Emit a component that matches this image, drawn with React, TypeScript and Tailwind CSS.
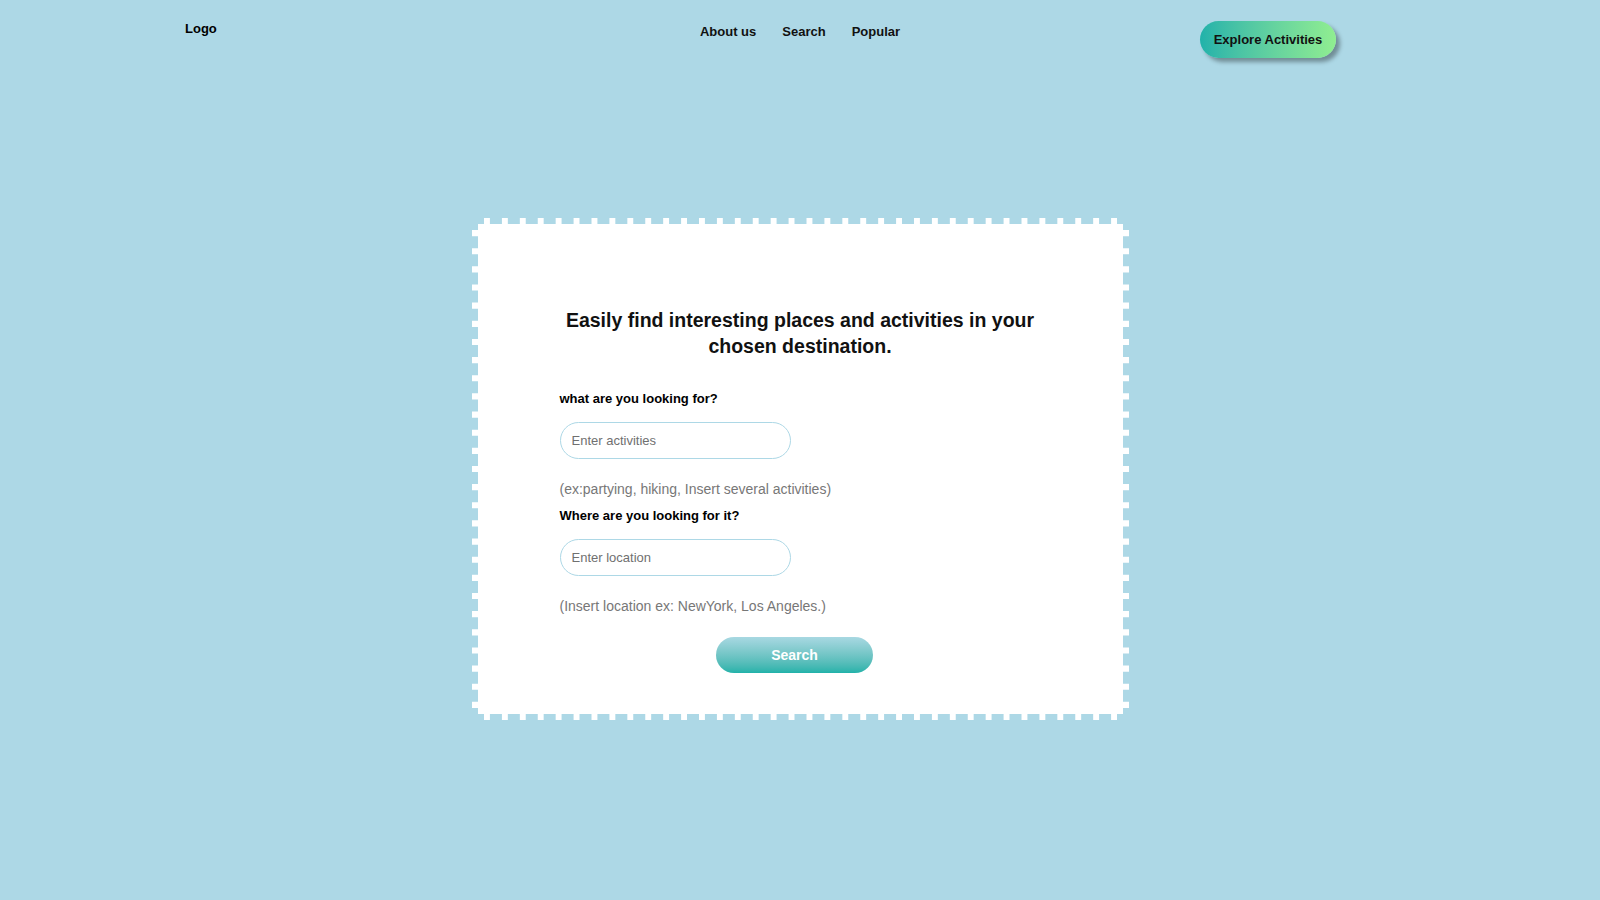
import React from "react";

const NAV_LINKS = ["About us", "Search", "Popular"];

function Header() {
  return (
    <header className="grid grid-cols-[1fr_auto_1fr] items-start pt-[21px]">
      <a href="#" className="ml-[185px] mt-[-2px] justify-self-start text-[13px] font-bold leading-5 text-black">
        Logo
      </a>
      <nav className="mt-[1px] flex items-center gap-[26px] text-[13px] font-bold leading-5 text-[#111]">
        {NAV_LINKS.map((link) => (
          <a key={link} href="#">
            {link}
          </a>
        ))}
      </nav>
      <div className="mr-[264px] justify-self-end">
        <button className="h-[37px] w-[136px] rounded-full bg-gradient-to-r from-[#20b2aa] to-[#90ee90] text-[13px] font-bold text-[#111] shadow-[4px_4px_4px_rgba(0,0,0,0.35)]">
          Explore Activities
        </button>
      </div>
    </header>
  );
}

function Field({ label, placeholder, hint }: { label: string; placeholder: string; hint: string }) {
  return (
    <div className="flex flex-col">
      <label className="text-[13px] font-bold leading-5 text-black">{label}</label>
      <input
        placeholder={placeholder}
        className="mt-[13px] h-[37px] w-[231px] rounded-full border border-[#add8e6] bg-white px-[11px] text-[13px] text-[#444] outline-none placeholder:text-[#707070]"
      />
      <p className="mt-[20px] text-[14px] leading-5 text-[#777]">{hint}</p>
    </div>
  );
}

function SearchCard() {
  return (
    <section className="mx-auto mt-[160px] w-[657px] border-[6px] border-dashed border-[#add8e6] bg-white px-[82px] pb-[41px] pt-[83px]">
      <h1 className="text-center text-[19.5px] font-bold leading-[26px] text-[#111]">
        Easily find interesting places and activities in your chosen destination.
      </h1>
      <form className="mt-[30px] flex flex-col gap-[7px]" onSubmit={(e) => e.preventDefault()}>
        <Field
          label="what are you looking for?"
          placeholder="Enter activities"
          hint="(ex:partying, hiking, Insert several activities)"
        />
        <Field
          label="Where are you looking for it?"
          placeholder="Enter location"
          hint="(Insert location ex: NewYork, Los Angeles.)"
        />
        <div className="mt-[14px] flex justify-center pr-[11px]">
          <button className="h-[36px] w-[157px] rounded-full bg-gradient-to-b from-[#a8d8e2] to-[#20b2aa] text-[14px] font-bold text-white">
            Search
          </button>
        </div>
      </form>
    </section>
  );
}

export default function App() {
  return (
    <div className="min-h-screen bg-[#add8e6] font-['Liberation_Sans',Arial,sans-serif]">
      <Header />
      <SearchCard />
    </div>
  );
}
